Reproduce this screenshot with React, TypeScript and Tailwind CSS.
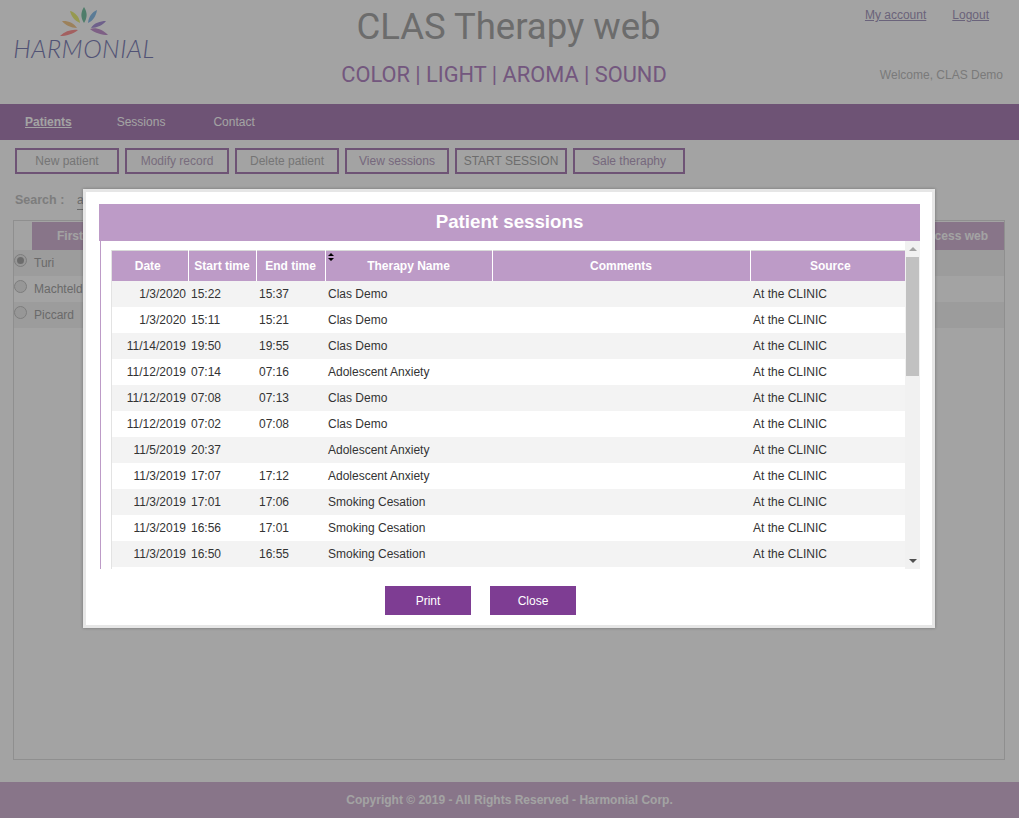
const sessions = [
  ["1/3/2020", "15:22", "15:37", "Clas Demo"],
  ["1/3/2020", "15:11", "15:21", "Clas Demo"],
  ["11/14/2019", "19:50", "19:55", "Clas Demo"],
  ["11/12/2019", "07:14", "07:16", "Adolescent Anxiety"],
  ["11/12/2019", "07:08", "07:13", "Clas Demo"],
  ["11/12/2019", "07:02", "07:08", "Clas Demo"],
  ["11/5/2019", "20:37", "", "Adolescent Anxiety"],
  ["11/3/2019", "17:07", "17:12", "Adolescent Anxiety"],
  ["11/3/2019", "17:01", "17:06", "Smoking Cesation"],
  ["11/3/2019", "16:56", "17:01", "Smoking Cesation"],
  ["11/3/2019", "16:50", "16:55", "Smoking Cesation"],
];

const actions = [
  { label: "New patient", width: "w-[104px]", color: "text-[#b8b8b8]" },
  { label: "Modify record", width: "w-[104px]", color: "text-[#bcaac4]" },
  { label: "Delete patient", width: "w-[104px]", color: "text-[#b8b8b8]" },
  { label: "View sessions", width: "w-[104px]", color: "text-[#b9a3c4]" },
  { label: "START SESSION", width: "w-[112px]", color: "text-[#ababab]" },
  { label: "Sale theraphy", width: "w-[112px]", color: "text-[#b9a3c4]" },
];

const patients = ["Turi", "Machteld", "Piccard"];

function Logo() {
  return (
    <div className="flex flex-col items-center w-[142px]">
      <svg width="48" height="31" viewBox="0 0 48 31">
        <path d="M24 1 C27.5 6 27.5 12 24 17 C20.5 12 20.5 6 24 1Z" fill="#7cc4a6" />
        <path d="M10 5 C15 6 19.5 11 20 17 C15 15 11 10 10 5Z" fill="#ebef7c" />
        <path d="M37 4 C36 10 33 15 28 17 C28.5 11 32 6 37 4Z" fill="#8ec0eb" />
        <path d="M2 15 C8 14.5 14 17 17 22 C11 22 5 19 2 15Z" fill="#f5ca8f" />
        <path d="M46 15 C43 19 37 22 31 22 C34 17 40 15 46 15Z" fill="#ac96da" />
        <path d="M0 30 C5 25 12 23 18 24 C13 28 6 30 0 30Z" fill="#ff9697" />
        <path d="M48 29 C42 29 35 27 30 23 C36 21 43 24 48 29Z" fill="#c596d1" />
      </svg>
      <span className="font-['Lato',sans-serif] font-light italic text-[25px] leading-[22px] tracking-[0.5px] text-[#7f82b8]">
        HARMONIAL
      </span>
    </div>
  );
}

function ScrollBar() {
  return (
    <div className="w-[15px] bg-[#f1f1f1] flex flex-col items-center">
      <div className="h-[16px] flex items-center justify-center">
        <div className="w-0 h-0 border-x-[4px] border-x-transparent border-b-[4px] border-b-[#a3a3a3]" />
      </div>
      <div className="w-[13px] h-[119px] bg-[#c1c1c1]" />
      <div className="flex-1" />
      <div className="h-[16px] flex items-center justify-center">
        <div className="w-0 h-0 border-x-[4px] border-x-transparent border-t-[4px] border-t-[#505050]" />
      </div>
    </div>
  );
}

function SessionsDialog() {
  return (
    <div className="absolute left-[83px] top-[189px] w-[852px] h-[439px] bg-white border-[3px] border-[#e6e6e6] pt-[12px] pl-[13px] pr-[12px] shadow-[0_0_3px_rgba(0,0,0,0.3)]">
      <div className="h-[37px] bg-[#bd9bc7] text-white font-bold text-[18.72px] flex items-center justify-center">
        Patient sessions
      </div>
      <div className="flex h-[328px]">
        <div className="flex-1 overflow-hidden ml-[1px] border-l border-l-[#bd9bc7] pl-[10px] pt-[9px]">
          <div className="border-l border-l-[#e3e3e3] h-full overflow-hidden">
            <table className="w-[793px] table-fixed border-collapse text-[12px] text-[#333333]">
              <thead>
                <tr className="h-[30px] bg-[#bd9bc7] text-white font-bold text-center border-t border-t-[#d9d9d9]">
                  <th className="w-[76px] pr-[4px]">Date</th>
                  <th className="w-[68px] border-l border-l-white">Start time</th>
                  <th className="w-[69px] border-l border-l-white">End time</th>
                  <th className="w-[167px] border-l border-l-white relative">
                    <svg className="absolute left-[2px] top-[2px]" width="6" height="8" viewBox="0 0 6 8">
                      <path d="M3 0 L6 3 L0 3Z M3 8 L0 5 L6 5Z" fill="#000000" />
                    </svg>
                    Therapy Name
                  </th>
                  <th className="w-[258px] border-l border-l-white">Comments</th>
                  <th className="border-l border-l-white pl-[5px]">Source</th>
                </tr>
              </thead>
              <tbody>
                {sessions.map((s, i) => (
                  <tr key={i} className={i % 2 === 0 ? "h-[26px] bg-[#f3f3f3]" : "h-[26px] bg-white"}>
                    <td className="text-right pr-[2px]">{s[0]}</td>
                    <td className="pl-[3px]">{s[1]}</td>
                    <td className="pl-[3px]">{s[2]}</td>
                    <td className="pl-[3px]">{s[3]}</td>
                    <td></td>
                    <td className="pl-[3px]">At the CLINIC</td>
                  </tr>
                ))}
              </tbody>
            </table>
          </div>
        </div>
        <ScrollBar />
      </div>
      <div className="flex justify-center gap-[19px] mt-[17px] pr-[58px]">
        <button className="w-[86px] h-[29px] bg-[#7e3d93] text-white text-[12px]">Print</button>
        <button className="w-[86px] h-[29px] bg-[#7e3d93] text-white text-[12px]">Close</button>
      </div>
    </div>
  );
}

export default function App() {
  return (
    <div className="relative w-[1019px] h-[818px] overflow-hidden bg-white font-['Liberation_Sans',Arial,sans-serif] text-[12px] text-[#bfbfbf] flex flex-col">
      {/* Cabecalho */}
      <header className="h-[104px] grid grid-cols-[1fr_auto_1fr]">
        <div className="pl-[13px] pt-[6px]">
          <Logo />
        </div>
        <div className="flex flex-col items-center pt-[6px] pr-[2px]">
          <h1 className="font-['Roboto',sans-serif] text-[36.5px] leading-[42px] text-[#a9a9a9]">CLAS Therapy web</h1>
          <p className="font-['Roboto',sans-serif] text-[21.8px] leading-[26px] mt-[14px] pr-[9px] text-[#b488c6]">
            COLOR | LIGHT | AROMA | SOUND
          </p>
        </div>
        <div className="flex flex-col items-end pr-[16px]">
          <div className="flex gap-[26px] pt-[6px] pr-[14px] text-[#a79bc0]">
            <a className="underline">My account</a>
            <a className="underline">Logout</a>
          </div>
          <div className="mt-[42px]">Welcome, CLAS Demo</div>
        </div>
      </header>

      <nav className="h-[36px] bg-[#ad82b8] flex items-center pl-[25px] text-white">
        <a className="font-bold underline">Patients</a>
        <a className="ml-[45px]">Sessions</a>
        <a className="ml-[48px]">Contact</a>
      </nav>

      <div className="flex gap-[6px] pl-[15px] mt-[8px]">
        {actions.map((a) => (
          <button key={a.label} className={`${a.width} h-[26px] border-2 border-[#ad82b8] bg-white text-[12px] ${a.color}`}>
            {a.label}
          </button>
        ))}
      </div>

      <div className="flex items-center pl-[15px] mt-[16px] h-[20px]">
        <span className="font-bold text-[12.5px] text-[#c4c4c4] w-[62px]">Search :</span>
        <span className="w-[120px] border-b border-b-[#a8a8a8] text-[#a8a8a8]">a</span>
      </div>

      {/* Lista de pacientes */}
      <div className="mx-[13px] w-[992px] h-[540px] mt-[10px] border border-[#e0e0e0] pt-[1px]">
        <div className="ml-[18px] h-[28px] bg-[#d5b7d7] text-white font-bold flex items-center justify-between px-[25px]">
          <span>First name</span>
          <span className="-mr-[9px]">Access web</span>
        </div>
        {patients.map((p, i) => (
          <div key={p} className={i % 2 === 0 ? "h-[26px] bg-[#f5f5f5] flex items-center" : "h-[26px] flex items-center"}>
            <span className="w-[13px] h-[13px] mb-[5px] rounded-full border border-[#c4c4c4] bg-[#ececec] flex items-center justify-center">
              {i === 0 && <span className="w-[7px] h-[7px] rounded-full bg-[#aaaaaa]" />}
            </span>
            <span className="ml-[7px] text-[#a6a6a6]">{p}</span>
          </div>
        ))}
      </div>

      <footer className="mt-auto h-[36px] bg-[#d5b7d7] flex items-center justify-center text-white font-bold">
        Copyright © 2019 - All Rights Reserved - Harmonial Corp.
      </footer>

      {/* Fundo do modal */}
      <div className="absolute inset-0 bg-black/36" />
      <SessionsDialog />
    </div>
  );
}
